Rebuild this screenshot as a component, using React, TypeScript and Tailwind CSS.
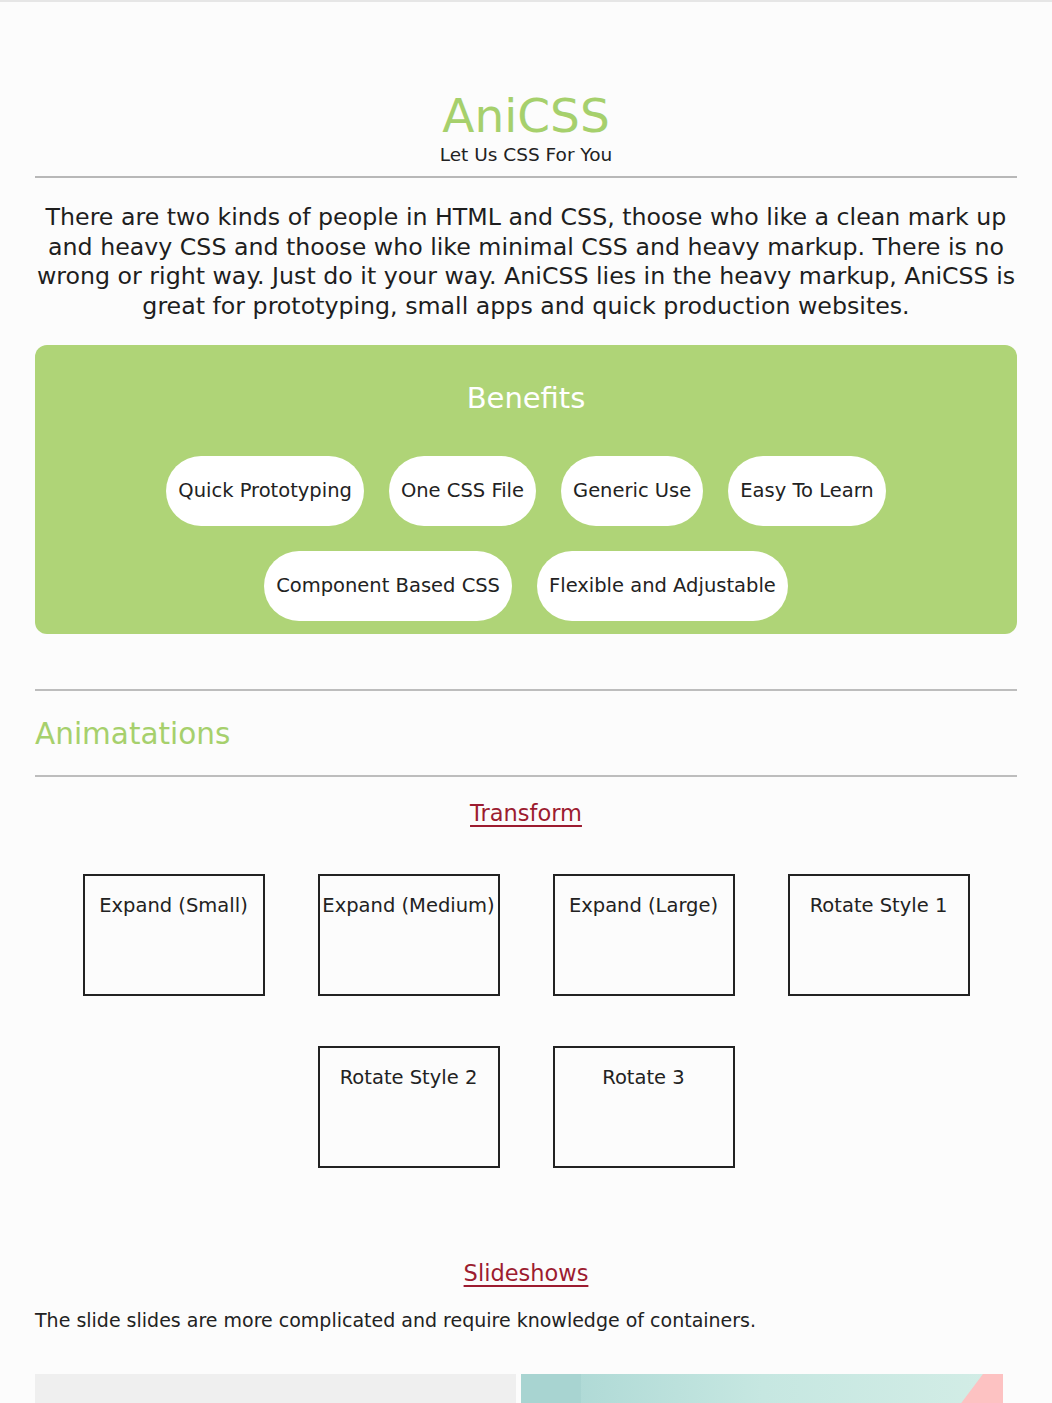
import React from "react";

const pills1 = ["Quick Prototyping", "One CSS File", "Generic Use", "Easy To Learn"];
const pills2 = ["Component Based CSS", "Flexible and Adjustable"];
const boxes1 = ["Expand (Small)", "Expand (Medium)", "Expand (Large)", "Rotate Style 1"];
const boxes2 = ["Rotate Style 2", "Rotate 3"];

function Pill({ t }: { t: string }) {
  return (
    <div className="bg-white rounded-full h-[70px] px-[12px] flex items-center text-[19.5px] text-[#222]">
      {t}
    </div>
  );
}

function Box({ t }: { t: string }) {
  return (
    <div className="w-[182px] h-[122px] border-2 border-[#222] text-center pt-[15px] text-[19.5px] text-[#222] whitespace-nowrap">
      {t}
    </div>
  );
}

export default function App() {
  return (
    <div
      className="min-h-[1403px] bg-[#fcfcfc] border-t-2 border-[#e6e6e6] text-[#222]"
      style={{ fontFamily: '"DejaVu Sans", "Open Sans", sans-serif' }}
    >
      <div className="px-[35px]">
        <header className="pt-[88px] text-center">
          <h1 className="text-[47px] leading-[52px] text-[#a6d06c]">AniCSS</h1>
          <p className="text-[18.5px] leading-[22px] mt-[2px]">Let Us CSS For You</p>
        </header>
        <hr className="mt-[10px] border-0 h-[2px] bg-[#b8b8b8]" />
        <p className="mt-[25px] -mx-[2px] text-center text-[23.7px] leading-[29.5px] text-[#1e1e1e]">
          There are two kinds of people in HTML and CSS, thoose who like a clean mark up
          <br />
          and heavy CSS and thoose who like minimal CSS and heavy markup. There is no
          <br />
          wrong or right way. Just do it your way. AniCSS lies in the heavy markup, AniCSS is
          <br />
          great for prototyping, small apps and quick production websites.
        </p>
        <section className="mt-[24px] bg-[#afd477] rounded-[12px] h-[289px] pt-[35px]">
          <h2 className="text-center text-white text-[29px] leading-[36px]">Benefits</h2>
          <div className="mt-[40px] flex justify-center gap-[25px]">
            {pills1.map((p) => (
              <Pill key={p} t={p} />
            ))}
          </div>
          <div className="mt-[25px] flex justify-center gap-[25px]">
            {pills2.map((p) => (
              <Pill key={p} t={p} />
            ))}
          </div>
        </section>
        <hr className="mt-[55px] border-0 h-[2px] bg-[#bdbdbd]" />
        <h2 className="mt-[25px] text-[29.5px] leading-[36px] text-[#a6d06c]">Animatations</h2>
        <hr className="mt-[23px] border-0 h-[2px] bg-[#bdbdbd]" />
        <h3 className="mt-[21px] text-center text-[22.5px] leading-[30px]">
          <span className="text-[#9c1c30] underline underline-offset-[4px] decoration-2">Transform</span>
        </h3>
        <div className="mt-[46px] mx-auto w-[890px] flex flex-wrap justify-center gap-x-[53px] gap-y-[50px]">
          {boxes1.map((b) => (
            <Box key={b} t={b} />
          ))}
          {boxes2.map((b) => (
            <Box key={b} t={b} />
          ))}
        </div>
        <h3 className="mt-[90px] text-center text-[22.5px] leading-[30px]">
          <span className="text-[#9c1c30] underline underline-offset-[4px] decoration-2">Slideshows</span>
        </h3>
        <p className="mt-[20px] text-[19px] leading-[24px]">
          The slide slides are more complicated and require knowledge of containers.
        </p>
        <div className="mt-[42px] flex gap-[5px] h-[40px]">
          <div className="w-[481px] bg-[#efefef]" />
          <div className="w-[482px] relative overflow-hidden bg-gradient-to-r from-[#a9d6d3] via-[#c6e7e1] to-[#d3ede6]">
            <div className="absolute inset-y-0 left-0 w-[60px] bg-[#a8d4d1]" />
            <svg className="absolute right-0 top-0 h-full w-[50px]" viewBox="0 0 50 40" preserveAspectRatio="none">
              <polygon points="50,0 30,0 0,40 50,40" fill="#fdc2c2" />
            </svg>
          </div>
        </div>
      </div>
    </div>
  );
}
